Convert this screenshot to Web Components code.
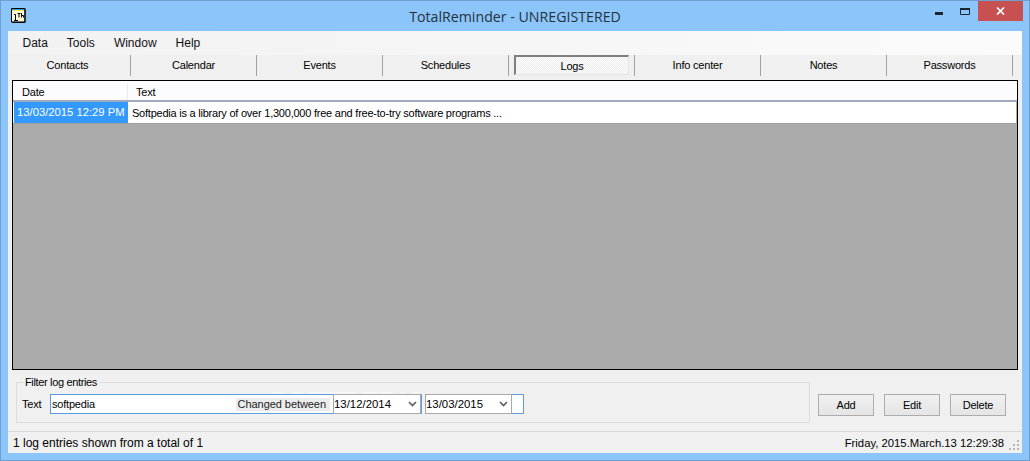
<!DOCTYPE html>
<html>
<head>
<meta charset="utf-8">
<style>
html, body { margin: 0; height: 100%; overflow: hidden; }
body { font: 11px "Liberation Sans", Arial, sans-serif; letter-spacing: -0.2px; color: #000; }
</style>
</head>
<body>
<app-window>
    <menu-bar slot="menu">
        <menu-item>Data</menu-item>
        <menu-item>Tools</menu-item>
        <menu-item>Window</menu-item>
        <menu-item>Help</menu-item>
    </menu-bar>
    <tab-bar slot="tabs">
        <tab-button>Contacts</tab-button>
        <tab-button>Calendar</tab-button>
        <tab-button>Events</tab-button>
        <tab-button>Schedules</tab-button>
        <tab-button active>Logs</tab-button>
        <tab-button>Info center</tab-button>
        <tab-button>Notes</tab-button>
        <tab-button>Passwords</tab-button>
    </tab-bar>
    <log-grid slot="grid"></log-grid>
    <filter-box slot="filter"></filter-box>
    <action-buttons slot="actions"></action-buttons>
    <status-bar slot="status"></status-bar>
</app-window>

<script>
class AppWindow extends HTMLElement {
    constructor() {
        super();
        this.attachShadow({ mode: 'open' });
    }

    connectedCallback() {
        this.shadowRoot.innerHTML = `
            <style>
                :host { display: flex; flex-direction: column; width: 1030px; height: 461px; box-sizing: border-box; background: #8cc5f9; border: 1px solid #6d9fd0; }
                .title { height: 30px; flex: none; display: flex; align-items: flex-start; position: relative; }
                .icon { margin: 7px 0 0 10px; width: 15px; height: 15px; }
                .name { position: absolute; left: 0; right: 0; top: 6px; text-align: center; font: 14.2px "Open Sans", sans-serif; letter-spacing: 0; color: #26323d; }
                .caps { margin-left: auto; margin-right: 6px; display: flex; height: 20px; }
                .cap { width: 26px; display: flex; justify-content: center; align-items: flex-start; }
                .cap.close { width: 45px; background: #c75050; align-items: center; }
                .client { flex: 1; min-height: 0; margin: 0 7px 7px; display: flex; flex-direction: column; background: #f0f0f0; }
                .body { flex: 1; min-height: 0; display: flex; flex-direction: column; }
                .bottom { display: flex; align-items: flex-start; justify-content: space-between; padding: 12px 16px 0 8px; height: 61px; box-sizing: border-box; flex: none; }
            </style>
            <div class="title">
                <svg class="icon" viewBox="0 0 15 15">
                    <rect x="0.5" y="0.5" width="13" height="13" fill="#fdf9d8"/>
                    <rect x="1" y="1" width="12" height="1" fill="#2a9fe0"/>
                    <rect x="1" y="2" width="12" height="1" fill="#f2e84a"/>
                    <path d="M0.500 0.500h13.500v13.500h-13.500z" fill="none" stroke="#000"/>
                    <path d="M14 1v13.500h-13" fill="none" stroke="#000"/>
                    <path d="M3 6.500h1.500v5.500M3 12.500h4" fill="none" stroke="#000"/>
                    <path d="M6.500 5.500h3M8 5.500v4M10.500 5v4.500M10.500 7.500h2v2" fill="none" stroke="#000"/>
                </svg>
                <div class="name">TotalReminder - UNREGISTERED</div>
                <div class="caps">
                    <div class="cap"><svg width="8" height="3" viewBox="0 0 8 3" style="margin-top:11px"><rect width="8" height="3" fill="#1a2530"/></svg></div>
                    <div class="cap"><svg width="10" height="7" viewBox="0 0 10 7" style="margin-top:7px"><path d="M0.500 0.500h9v6h-9z" fill="none" stroke="#1a2530"/><rect width="10" height="2" fill="#1a2530"/></svg></div>
                    <div class="cap close"><svg width="9" height="8" viewBox="0 0 9 8"><path d="M1 0.500l7 7M8 0.500l-7 7" stroke="#fff" stroke-width="1.700"/></svg></div>
                </div>
            </div>
            <div class="client">
                <slot name="menu"></slot>
                <slot name="tabs"></slot>
                <div class="body"><slot name="grid"></slot></div>
                <div class="bottom">
                    <slot name="filter"></slot>
                    <slot name="actions"></slot>
                </div>
                <slot name="status"></slot>
            </div>
        `;
    }
}

class MenuBar extends HTMLElement {
    constructor() {
        super();
        this.attachShadow({ mode: 'open' });
    }

    connectedCallback() {
        this.shadowRoot.innerHTML = `
            <style>
                :host { display: flex; height: 24px; flex: none; padding-left: 5px; background: linear-gradient(to right, #f2f2f2, #f6f6f6 50%, #fbfbfb); }
            </style>
            <slot></slot>
        `;
    }
}

class MenuItem extends HTMLElement {
    constructor() {
        super();
        this.attachShadow({ mode: 'open' });
    }

    connectedCallback() {
        this.shadowRoot.innerHTML = `
            <style>
                :host { display: flex; align-items: center; padding: 0 9.5px; font-size: 12px; letter-spacing: 0; color: #111; }
            </style>
            <slot></slot>
        `;
    }
}

class TabBar extends HTMLElement {
    constructor() {
        super();
        this.attachShadow({ mode: 'open' });
    }

    connectedCallback() {
        this.shadowRoot.innerHTML = `
            <style>
                :host { display: flex; height: 21px; flex: none; margin: 0 0 4px -3px; }
            </style>
            <slot></slot>
        `;
    }
}

class TabButton extends HTMLElement {
    constructor() {
        super();
        this.attachShadow({ mode: 'open' });
    }

    connectedCallback() {
        this.shadowRoot.innerHTML = `
            <style>
                :host { display: flex; width: 126px; height: 21px; box-sizing: border-box; border-right: 1px solid #a0a0a0; align-items: center; justify-content: center; padding-bottom: 2px; position: relative; }
                :host([active]) .box { position: absolute; left: 5px; right: 5px; top: 0; bottom: 1px; box-sizing: border-box; border: 2px solid #7f7f7f; border-bottom: 1px solid #e4e4e4; border-right: 1px solid #e4e4e4; display: flex; align-items: center; justify-content: center;
                    background: repeating-conic-gradient(#fff 0 25%, #ececec 0 50%) 0 0 / 2px 2px; padding-top: 1px; }
                .box { display: contents; }
            </style>
            <div class="box"><slot></slot></div>
        `;
    }
}

class LogGrid extends HTMLElement {
    constructor() {
        super();
        this.attachShadow({ mode: 'open' });
    }

    connectedCallback() {
        this.shadowRoot.innerHTML = `
            <style>
                :host { display: block; height: 100%; box-sizing: border-box; margin: 0 4px; border: 1px solid #000; background: #ababab; }
                .row { display: flex; background: #fff; padding-left: 1px; }
                .head { height: 21px; background: #fcfcfe; border-bottom: 2px solid #a0a8bc; box-sizing: border-box; padding-top: 3px; }
                .head div { display: flex; align-items: center; box-sizing: border-box; }
                .date { width: 114px; flex: none; padding-left: 8px; box-sizing: border-box; }
                .head .date { border-right: 1px solid #e6e9f2; }
                .text { flex: 1; padding-left: 8px; }
                .cells { height: 22px; border-bottom: 1px solid #a0a0a0; margin-right: 1px; box-sizing: border-box; align-items: center; }
                .cells .date { height: 21px; background: #3399ff; color: #fff; padding-left: 3px; line-height: 21px; font-size: 11.25px; letter-spacing: 0; white-space: nowrap; }
                .cells .text { padding-left: 4px; letter-spacing: -0.23px; }
            </style>
            <div class="row head"><div class="date">Date</div><div class="text">Text</div></div>
            <div class="row cells">
                <div class="date">13/03/2015 12:29 PM</div>
                <div class="text">Softpedia is a library of over 1,300,000 free and free-to-try software programs ...</div>
            </div>
        `;
    }
}

class DatePick extends HTMLElement {
    constructor() {
        super();
        this.attachShadow({ mode: 'open' });
    }

    connectedCallback() {
        this.shadowRoot.innerHTML = `
            <style>
                :host { display: flex; width: 88px; height: 20px; box-sizing: border-box; border: 1px solid #a9a9a9; background: #fff; align-items: center; padding-left: 0; font-size: 11.4px; letter-spacing: 0; flex: none; }
                span { flex: 1; }
                svg { margin-right: 3px; }
            </style>
            <span><slot></slot></span>
            <svg width="9" height="6" viewBox="0 0 9 6"><path d="M1 1l3.500 3.500L8 1" fill="none" stroke="#606060" stroke-width="1.700"/></svg>
        `;
    }
}

class FilterBox extends HTMLElement {
    constructor() {
        super();
        this.attachShadow({ mode: 'open' });
    }

    connectedCallback() {
        this.shadowRoot.innerHTML = `
            <style>
                :host { display: block; width: 794px; height: 41px; box-sizing: border-box; border: 1px solid #dcdcdc; position: relative; }
                .legend { position: absolute; left: 7px; top: -7px; background: #f0f0f0; padding: 0 3px 0 1px; line-height: 13px; letter-spacing: -0.35px; }
                .row { display: flex; align-items: center; position: absolute; left: 5px; top: 11px; }
                .label { width: 28px; flex: none; }
                .input { width: 283px; height: 20px; box-sizing: border-box; border: 1px solid #5a9de0; border-right: 0; background: #fff; padding-left: 1px; display: flex; align-items: center; justify-content: space-between; }
                .changed { background: #ececec; height: 13px; line-height: 13px; padding: 0 4px 0 2px; margin-right: 3px; color: #222; letter-spacing: -0.06px; white-space: nowrap; }
                .gap { width: 4px; height: 20px; box-sizing: border-box; border-left: 1px solid #5a9de0; flex: none; }
                .end { width: 12px; height: 20px; box-sizing: border-box; border: 1px solid #5a9de0; border-left: 0; background: #fff; flex: none; }
                .mark { position: absolute; left: 250px; top: 4px; font: bold 30px/30px "Liberation Sans", sans-serif; letter-spacing: -1.5px; color: rgba(255,255,255,0.5); white-space: nowrap; }
            </style>
            <div class="mark">SOFTPEDIA</div>
            <div class="legend">Filter log entries</div>
            <div class="row">
                <div class="label">Text</div>
                <div class="input">softpedia<span class="changed">Changed between</span></div>
                <date-pick>13/12/2014</date-pick>
                <div class="gap"></div>
                <date-pick style="width:87px">13/03/2015</date-pick>
                <div class="end"></div>
            </div>
        `;
    }
}

class ActionButtons extends HTMLElement {
    constructor() {
        super();
        this.attachShadow({ mode: 'open' });
    }

    connectedCallback() {
        this.shadowRoot.innerHTML = `
            <style>
                :host { display: flex; gap: 10px; padding-top: 12px; }
                button { width: 56px; height: 22px; font: inherit; letter-spacing: inherit; color: #000; border: 1px solid #acacac; padding: 0; background: linear-gradient(#f0f0f0, #e5e5e5); }
            </style>
            <button>Add</button><button>Edit</button><button>Delete</button>
        `;
    }
}

class StatusBar extends HTMLElement {
    constructor() {
        super();
        this.attachShadow({ mode: 'open' });
    }

    connectedCallback() {
        this.shadowRoot.innerHTML = `
            <style>
                :host { display: flex; height: 22px; flex: none; box-sizing: border-box; border-top: 1px solid #d9d9d9; align-items: center; justify-content: space-between; padding: 0 2px 0 5px; font-size: 12px; letter-spacing: 0; }
                .right { display: flex; align-items: center; gap: 5px; font-size: 11.3px; }
                svg { margin-top: 6px; }
            </style>
            <span>1 log entries shown from a total of 1</span>
            <span class="right">Friday, 2015.March.13 12:29:38
                <svg width="11" height="11" viewBox="0 0 11 11" fill="#b8b8b8"><rect x="8" y="0" width="2" height="2"/><rect x="4" y="4" width="2" height="2"/><rect x="8" y="4" width="2" height="2"/><rect x="0" y="8" width="2" height="2"/><rect x="4" y="8" width="2" height="2"/><rect x="8" y="8" width="2" height="2"/></svg>
            </span>
        `;
    }
}

customElements.define('app-window', AppWindow);
customElements.define('menu-bar', MenuBar);
customElements.define('menu-item', MenuItem);
customElements.define('tab-bar', TabBar);
customElements.define('tab-button', TabButton);
customElements.define('log-grid', LogGrid);
customElements.define('date-pick', DatePick);
customElements.define('filter-box', FilterBox);
customElements.define('action-buttons', ActionButtons);
customElements.define('status-bar', StatusBar);
</script>
</body>
</html>
